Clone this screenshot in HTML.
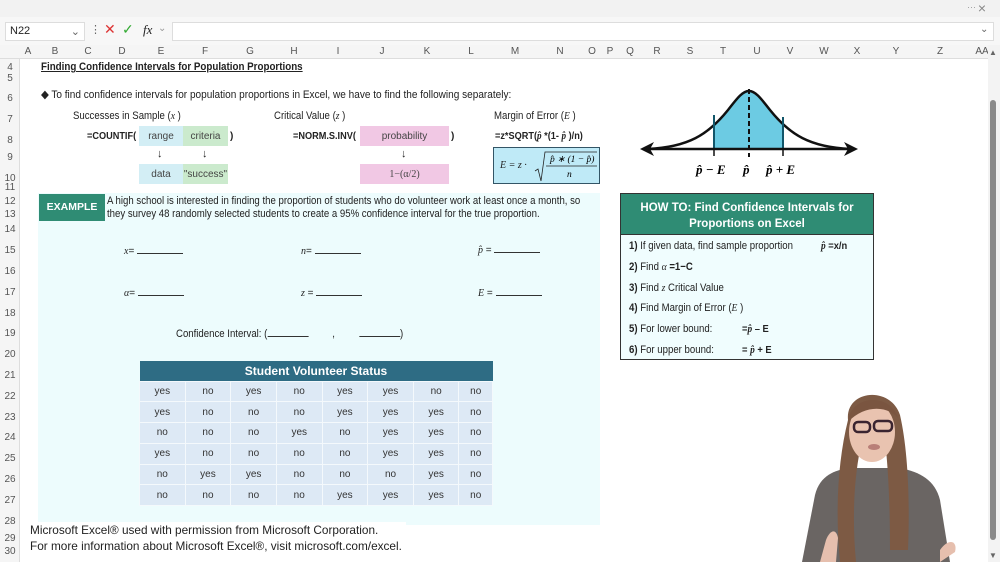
<!DOCTYPE html>
<html><head><meta charset="utf-8"><style>
*{margin:0;padding:0;box-sizing:border-box}
body{width:1000px;height:562px;overflow:hidden;background:#fff;font-family:"Liberation Sans",sans-serif;position:relative;color:#222}
.a{position:absolute;white-space:nowrap}
.c{transform:scaleX(.89);transform-origin:left top}
.rn{position:absolute;left:0;width:20px;text-align:center;font-size:10px;color:#555}
.ch{position:absolute;top:46px;font-size:10px;color:#555;transform:translateX(-50%)}
.i{font-family:"Liberation Serif",serif;font-style:italic}
.b{font-weight:bold}
.u{display:inline-block;width:46px;border-bottom:1px solid #333;height:10px;vertical-align:baseline}
.bx{position:absolute;height:20px;font-size:10px;text-align:center;line-height:22px;color:#444}
table{border-collapse:collapse;position:absolute;left:139px;top:361px;width:354px}
td{background:#dde9f5;border:1px solid #f4f9fc;text-align:center;font-size:10px;height:20.8px;color:#333}
th{background:#2e6c84;color:#fff;font-size:12px;height:20px}
</style></head><body>
<div class="a" style="left:0;top:0;width:1000px;height:17px;background:#f2f2f2"></div>
<div class="a" style="right:24px;top:2px;font-size:9px;color:#999">···</div>
<div class="a" style="right:14px;top:0;font-size:14px;color:#888">×</div>
<div class="a" style="left:0;top:17px;width:1000px;height:28px;background:#f7f7f7"></div>
<div class="a" style="left:5px;top:22px;width:80px;height:19px;background:#fff;border:1px solid #ddd;font-size:11px;padding:2px 4px">N22<span style="position:absolute;right:4px;color:#666">⌄</span></div>
<div class="a" style="left:90px;top:23px;font-size:11px;color:#666">⋮</div>
<div class="a" style="left:104px;top:21px;font-size:14px;color:#d33">✕</div>
<div class="a" style="left:122px;top:21px;font-size:14px;color:#3a3">✓</div>
<div class="a i" style="left:143px;top:22px;font-size:13px">fx</div>
<div class="a" style="left:158px;top:23px;font-size:10px;color:#999">⌄</div>
<div class="a" style="left:172px;top:22px;width:822px;height:19px;background:#fff;border:1px solid #ddd"></div>
<div class="a" style="left:980px;top:24px;font-size:10px;color:#666">⌄</div>
<div class="a" style="left:0;top:45px;width:1000px;height:14px;background:#f5f5f5;border-bottom:1px solid #ddd"></div>
<div class="a" style="left:0;top:59px;width:20px;height:503px;background:#f5f5f5;border-right:1px solid #ddd"></div>
<div class="ch" style="left:28px">A</div><div class="ch" style="left:55px">B</div><div class="ch" style="left:88px">C</div><div class="ch" style="left:122px">D</div><div class="ch" style="left:161px">E</div><div class="ch" style="left:205px">F</div><div class="ch" style="left:250px">G</div><div class="ch" style="left:294px">H</div><div class="ch" style="left:338px">I</div><div class="ch" style="left:382px">J</div><div class="ch" style="left:427px">K</div><div class="ch" style="left:471px">L</div><div class="ch" style="left:515px">M</div><div class="ch" style="left:560px">N</div><div class="ch" style="left:592px">O</div><div class="ch" style="left:610px">P</div><div class="ch" style="left:630px">Q</div><div class="ch" style="left:657px">R</div><div class="ch" style="left:690px">S</div><div class="ch" style="left:723px">T</div><div class="ch" style="left:757px">U</div><div class="ch" style="left:790px">V</div><div class="ch" style="left:824px">W</div><div class="ch" style="left:857px">X</div><div class="ch" style="left:896px">Y</div><div class="ch" style="left:940px">Z</div><div class="ch" style="left:982px">AA</div>
<div class="rn" style="top:62px">4</div><div class="rn" style="top:73px">5</div><div class="rn" style="top:93px">6</div><div class="rn" style="top:114px">7</div><div class="rn" style="top:135px">8</div><div class="rn" style="top:152px">9</div><div class="rn" style="top:173px">10</div><div class="rn" style="top:182px">11</div><div class="rn" style="top:196px">12</div><div class="rn" style="top:209px">13</div><div class="rn" style="top:224px">14</div><div class="rn" style="top:245px">15</div><div class="rn" style="top:266px">16</div><div class="rn" style="top:287px">17</div><div class="rn" style="top:308px">18</div><div class="rn" style="top:328px">19</div><div class="rn" style="top:349px">20</div><div class="rn" style="top:370px">21</div><div class="rn" style="top:391px">22</div><div class="rn" style="top:412px">23</div><div class="rn" style="top:432px">24</div><div class="rn" style="top:453px">25</div><div class="rn" style="top:474px">26</div><div class="rn" style="top:495px">27</div><div class="rn" style="top:516px">28</div><div class="rn" style="top:533px">29</div><div class="rn" style="top:546px">30</div>
<div class="a" style="left:988px;top:45px;width:12px;height:517px;background:#f3f3f3"></div>
<div class="a" style="left:990px;top:100px;width:6px;height:440px;background:#8a8a8a;border-radius:3px"></div>
<div class="a" style="left:989px;top:48px;font-size:8px;color:#666">▲</div>
<div class="a" style="left:989px;top:551px;font-size:8px;color:#666">▼</div>

<div class="a b c" style="left:41px;top:61px;font-size:11px;text-decoration:underline">Finding Confidence Intervals for Population Proportions</div>
<div class="a c" style="left:41px;top:88px;font-size:11.3px">◆ To find confidence intervals for population proportions in Excel, we have to find the following separately:</div>
<div class="a c" style="left:73px;top:110px;font-size:10.8px">Successes in Sample (<span class="i">x</span> )</div>
<div class="a c" style="left:274px;top:110px;font-size:10.8px">Critical Value (<span class="i">z</span> )</div>
<div class="a c" style="left:494px;top:110px;font-size:10.8px">Margin of Error (<span class="i">E</span> )</div>
<div class="a b c" style="left:87px;top:131px;font-size:10.3px">=COUNTIF(</div>
<div class="bx" style="left:139px;top:126px;width:44px;background:#d3eef5">range</div>
<div class="bx" style="left:183px;top:126px;width:45px;background:#cbeacd">criteria</div>
<div class="a b" style="left:230px;top:131px;font-size:10px">)</div>
<div class="a" style="left:157px;top:148px;font-size:11px">↓</div><div class="a" style="left:202px;top:148px;font-size:11px">↓</div>
<div class="bx" style="left:139px;top:164px;width:44px;background:#d3eef5">data</div>
<div class="bx" style="left:183px;top:164px;width:45px;background:#cbeacd">"success"</div>
<div class="a b c" style="left:293px;top:131px;font-size:10.3px">=NORM.S.INV(</div>
<div class="bx" style="left:360px;top:126px;width:89px;background:#f1c8e4">probability</div>
<div class="a b" style="left:451px;top:131px;font-size:10px">)</div>
<div class="a" style="left:401px;top:148px;font-size:11px">↓</div>
<div class="bx" style="left:360px;top:164px;width:89px;background:#f1c8e4;font-family:'Liberation Serif',serif">1−(α/2)</div>
<div class="a b c" style="left:495px;top:131px;font-size:10.3px">=z*SQRT(<span class="i">p̂</span> *(1- <span class="i">p̂</span> )/n)</div>
<div class="a" style="left:493px;top:147px;width:107px;height:37px;background:#bfeaf7;border:1px solid #356;"></div>
<div class="a i" style="left:500px;top:160px;font-size:10px">E = z ·</div>
<svg class="a" style="left:533px;top:149px" width="66" height="34"><path d="M2 22 L5 20 L8 32 L12 3 L64 3" fill="none" stroke="#222" stroke-width="0.8"/><line x1="13" y1="17" x2="64" y2="17" stroke="#222" stroke-width="0.8"/><text x="17" y="13" font-size="9.5" font-family="Liberation Serif" font-style="italic">p̂ ∗ (1 − p̂)</text><text x="34" y="28" font-size="9.5" font-family="Liberation Serif" font-style="italic">n</text></svg>

<div class="a" style="left:38px;top:193px;width:562px;height:332px;background:#edfcfd"></div>
<div class="a b" style="left:39px;top:194px;width:66px;height:27px;background:#2f8c74;color:#fff;font-size:10.5px;text-align:center;line-height:27px">EXAMPLE</div>
<div class="a c" style="left:107px;top:195px;font-size:10.8px;line-height:13px">A high school is interested in finding the proportion of students who do volunteer work at least once a month, so<br>they survey 48 randomly selected students to create a 95% confidence interval for the true proportion.</div>
<div class="a" style="left:124px;top:244px;font-size:10px"><span class="i">x</span>= <span class="u"></span></div>
<div class="a" style="left:301px;top:244px;font-size:10px"><span class="i">n</span>= <span class="u"></span></div>
<div class="a" style="left:478px;top:243px;font-size:10px"><span class="i">p̂</span> = <span class="u"></span></div>
<div class="a" style="left:124px;top:286px;font-size:10px"><span class="i">α</span>= <span class="u"></span></div>
<div class="a" style="left:301px;top:286px;font-size:10px"><span class="i">z</span> = <span class="u"></span></div>
<div class="a" style="left:478px;top:286px;font-size:10px"><span class="i">E</span> = <span class="u"></span></div>
<div class="a c" style="left:176px;top:327px;font-size:10.8px">Confidence Interval: (<span class="u"></span> &nbsp; &nbsp; &nbsp; &nbsp; , &nbsp; &nbsp; &nbsp; &nbsp; <span class="u"></span>)</div>
<table>
<tr><th colspan="8">Student Volunteer Status</th></tr>
<tr><td>yes</td><td>no</td><td>yes</td><td>no</td><td>yes</td><td>yes</td><td>no</td><td>no</td></tr>
<tr><td>yes</td><td>no</td><td>no</td><td>no</td><td>yes</td><td>yes</td><td>yes</td><td>no</td></tr>
<tr><td>no</td><td>no</td><td>no</td><td>yes</td><td>no</td><td>yes</td><td>yes</td><td>no</td></tr>
<tr><td>yes</td><td>no</td><td>no</td><td>no</td><td>no</td><td>yes</td><td>yes</td><td>no</td></tr>
<tr><td>no</td><td>yes</td><td>yes</td><td>no</td><td>no</td><td>no</td><td>yes</td><td>no</td></tr>
<tr><td>no</td><td>no</td><td>no</td><td>no</td><td>yes</td><td>yes</td><td>yes</td><td>no</td></tr>
</table>
<div class="a" style="left:30px;top:522px;font-size:11.8px;line-height:16px;color:#222;background:#fff;padding-right:4px">Microsoft Excel® used with permission from Microsoft Corporation.<br>For more information about Microsoft Excel®, visit microsoft.com/excel.</div>

<svg class="a" style="left:638px;top:85px" width="222" height="95">
<defs><clipPath id="c"><rect x="75" y="0" width="70" height="80"/></clipPath></defs>
<path d="M10 64 C50 62 70 50 90 25 C100 12 105 6 111 6 C117 6 122 12 132 25 C152 50 172 62 212 64 Z" fill="#6ccbe3" clip-path="url(#c)"/>
<path d="M10 64 C50 62 70 50 90 25 C100 12 105 6 111 6 C117 6 122 12 132 25 C152 50 172 62 212 64" fill="none" stroke="#111" stroke-width="2.5"/>
<line x1="76" y1="30" x2="76" y2="64" stroke="#12566a" stroke-width="2"/><line x1="145" y1="32" x2="145" y2="64" stroke="#12566a" stroke-width="2"/>
<line x1="111" y1="4" x2="111" y2="72" stroke="#111" stroke-width="2" stroke-dasharray="5,3"/>
<line x1="8" y1="64" x2="214" y2="64" stroke="#111" stroke-width="2.5"/>
<path d="M2 64 L16 57 L12 64 L16 71Z M220 64 L206 57 L210 64 L206 71Z" fill="#111"/>
<line x1="76" y1="64" x2="76" y2="71" stroke="#111" stroke-width="1.5"/><line x1="145" y1="64" x2="145" y2="71" stroke="#111" stroke-width="1.5"/>
<text x="58" y="89" font-size="13" font-family="Liberation Serif" font-style="italic" font-weight="bold">p̂ − E</text>
<text x="105" y="89" font-size="13" font-family="Liberation Serif" font-style="italic" font-weight="bold">p̂</text>
<text x="128" y="89" font-size="13" font-family="Liberation Serif" font-style="italic" font-weight="bold">p̂ + E</text>
</svg>

<div class="a" style="left:620px;top:193px;width:254px;height:167px;background:#f0fdfe;border:1px solid #333"></div>
<div class="a b" style="left:620px;top:193px;width:254px;height:42px;background:#2f8c74;color:#fff;font-size:11.5px;text-align:center;line-height:16px;padding-top:6px;border:1px solid #333;white-space:normal">HOW TO: Find Confidence Intervals for<br>Proportions on Excel</div>
<div class="a c" style="left:629px;top:240px;font-size:10.8px"><b>1)</b> If given data, find sample proportion</div>
<div class="a b c" style="left:821px;top:240px;font-size:10.5px"><span class="i">p̂</span> =x/n</div>
<div class="a c" style="left:629px;top:261px;font-size:10.8px"><b>2)</b> Find <span class="i">α</span> <b>=1−C</b></div>
<div class="a c" style="left:629px;top:282px;font-size:10.8px"><b>3)</b> Find <span class="i">z</span> Critical Value</div>
<div class="a c" style="left:629px;top:302px;font-size:10.8px"><b>4)</b> Find Margin of Error (<span class="i">E</span> )</div>
<div class="a c" style="left:629px;top:323px;font-size:10.8px"><b>5)</b> For lower bound:</div>
<div class="a b c" style="left:742px;top:323px;font-size:10.5px">=<span class="i">p̂</span> – E</div>
<div class="a c" style="left:629px;top:344px;font-size:10.8px"><b>6)</b> For upper bound:</div>
<div class="a b c" style="left:742px;top:344px;font-size:10.5px">= <span class="i">p̂</span> + E</div>

<svg class="a" style="left:790px;top:380px" width="190" height="182">
<path d="M25 115 C30 95 45 90 60 88 L110 88 C130 92 145 100 150 120 L160 182 L12 182 Z" fill="#6a6563"/>
<path d="M58 40 C55 10 100 5 110 35 C118 70 120 120 118 170 L100 170 C100 120 98 90 96 70 L70 70 C64 100 62 140 66 182 L50 182 C45 130 48 80 58 40Z" fill="#7d5a44"/>
<ellipse cx="82" cy="52" rx="23" ry="30" fill="#e9c3b0"/>
<path d="M58 42 C60 15 100 12 108 38 C98 26 75 24 58 42Z" fill="#7a5540"/>
<rect x="64" y="42" width="16" height="10" rx="4" fill="none" stroke="#3a2430" stroke-width="2.5"/>
<rect x="84" y="41" width="18" height="10" rx="4" fill="none" stroke="#3a2430" stroke-width="2.5"/>
<ellipse cx="84" cy="67" rx="6" ry="3" fill="#b97f78"/>
<path d="M36 160 C40 150 46 148 48 158 L46 182 L30 182Z" fill="#e6bfae"/>
<path d="M150 170 C158 158 168 160 165 172 L150 182 Z" fill="#e6bfae"/>
</svg>
</body></html>
